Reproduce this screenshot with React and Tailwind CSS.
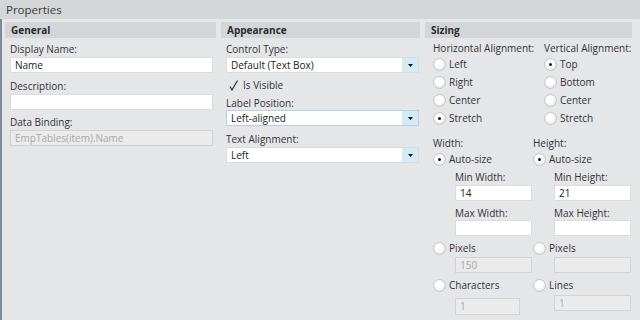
import React from 'react';

// Small building blocks for the property sheet
const Label = ({ children, className = '' }) => (
  <div className={`h-[14px] leading-[14px] whitespace-nowrap ${className}`}>{children}</div>
);

const TextInput = ({ value = '', disabled = false, className = '' }) => (
  <div
    className={`h-[16px] leading-[14px] pl-[4px] border whitespace-nowrap ${
      disabled
        ? 'bg-[#ebebeb] border-[#d3d3d3] text-[#a9a9a9]'
        : 'bg-white border-[#dcdcdc] text-[#222]'
    } ${className}`}
  >
    {value}
  </div>
);

const Select = ({ value, focused = false, className = '' }) => (
  <div
    className={`h-[16px] flex border bg-white ${
      focused ? 'border-[#b3d4e8]' : 'border-[#dcdcdc]'
    } ${className}`}
  >
    <div className="flex-1 leading-[14px] pl-[4px] text-[#222] whitespace-nowrap">{value}</div>
    <div className="w-[16px] bg-[#d6eaf6] flex items-center justify-center">
      <svg width="5" height="3" viewBox="0 0 5 3">
        <path d="M0 0 L5 0 L2.5 3 Z" fill="#111" />
      </svg>
    </div>
  </div>
);

const Radio = ({ checked = false, label }) => (
  <div className="flex items-center h-[18px] gap-[3px] whitespace-nowrap">
    <span className="w-[13px] h-[13px] rounded-full border border-[#c8c8c8] bg-[radial-gradient(circle_at_45%_40%,#ffffff_35%,#d9d9d9_100%)] flex items-center justify-center">
      {checked && <span className="w-[3px] h-[3px] rounded-full bg-[#1a1a1a]" />}
    </span>
    <span>{label}</span>
  </div>
);

const Header = ({ children }) => (
  <div className="h-[16px] leading-[16px] bg-[#d4d5d6] pl-[6px] font-bold text-[#2a2a2a]">
    {children}
  </div>
);

const App = () => {
  return (
    <div className="w-[640px] h-[320px] bg-[#e5e6e7] text-[#333] font-['Open_Sans',sans-serif] text-[10px] flex flex-col overflow-hidden">
      {/* Title bar */}
      <div className="h-[19px] bg-[#d5d6d7] pl-[6px] text-[11.5px] leading-[19px] text-[#3a3a3a]">
        Properties
      </div>

      <div className="flex-1 flex border-l-2 border-[#7e8a97] pt-[3px]">
        {/* General */}
        <div className="w-[216px] pl-[3px] pr-[2px]">
          <Header>General</Header>
          <div className="pl-[5px] pr-[3px] pt-[4px]">
            <Label>Display Name:</Label>
            <TextInput value="Name" className="mt-[1px]" />
            <Label className="mt-[6px]">Description:</Label>
            <TextInput className="mt-[1px]" />
            <Label className="mt-[5px]">Data Binding:</Label>
            <TextInput value="EmpTables(item).Name" disabled className="mt-[1px]" />
          </div>
        </div>

        {/* Appearance */}
        <div className="w-[204px] pl-[3px] pr-[2px]">
          <Header>Appearance</Header>
          <div className="pl-[5px] pr-[1px] pt-[4px]">
            <Label>Control Type:</Label>
            <Select value="Default (Text Box)" className="mt-[1px]" />
            <div className="mt-[5px] h-[14px] flex items-center gap-[5px] pl-[3px]">
              <svg width="9" height="11" viewBox="0 0 9 11">
                <path d="M1 6.5 L3 10 L8.5 0.5" fill="none" stroke="#333" strokeWidth="1.2" />
              </svg>
              <span>Is Visible</span>
            </div>
            <Label className="mt-[4px]">Label Position:</Label>
            <Select value="Left-aligned" focused />
            <Label className="mt-[6px]">Text Alignment:</Label>
            <Select value="Left" className="mt-[1px]" />
          </div>
        </div>

        {/* Sizing */}
        <div className="flex-1 pl-[3px] pr-[8px]">
          <Header>Sizing</Header>
          <div className="pl-[8px] pt-[3px]">
            <div className="flex">
              <div className="w-[111px]">
                <Label>Horizontal Alignment:</Label>
                <Radio label="Left" />
                <Radio label="Right" />
                <Radio label="Center" />
                <Radio label="Stretch" checked />
              </div>
              <div className="flex-1">
                <Label>Vertical Alignment:</Label>
                <Radio label="Top" checked />
                <Radio label="Bottom" />
                <Radio label="Center" />
                <Radio label="Stretch" />
              </div>
            </div>

            <div className="flex mt-[9px]">
              <div className="w-[100px]">
                <Label>Width:</Label>
                <Radio label="Auto-size" checked />
                <div className="pl-[22px]">
                  <Label className="mt-[2px]">Min Width:</Label>
                  <TextInput value="14" className="mt-[1px] w-[77px]" />
                  <Label className="mt-[5px]">Max Width:</Label>
                  <TextInput className="w-[77px]" />
                </div>
                <div className="mt-[3px]">
                  <Radio label="Pixels" />
                </div>
                <div className="pl-[22px]">
                  <TextInput value="150" disabled className="w-[77px]" />
                </div>
                <div className="mt-[3px]">
                  <Radio label="Characters" />
                </div>
                <div className="pl-[22px]">
                  <TextInput value="1" disabled className="mt-[4px] w-[65px] h-[17px]" />
                </div>
              </div>
              <div className="flex-1">
                <Label>Height:</Label>
                <Radio label="Auto-size" checked />
                <div className="pl-[21px]">
                  <Label className="mt-[2px]">Min Height:</Label>
                  <TextInput value="21" className="mt-[1px] w-[77px]" />
                  <Label className="mt-[5px]">Max Height:</Label>
                  <TextInput className="w-[77px]" />
                </div>
                <div className="mt-[3px]">
                  <Radio label="Pixels" />
                </div>
                <div className="pl-[21px]">
                  <TextInput disabled className="w-[77px]" />
                </div>
                <div className="mt-[3px]">
                  <Radio label="Lines" />
                </div>
                <div className="pl-[21px]">
                  <TextInput value="1" disabled className="mt-[1px] w-[77px]" />
                </div>
              </div>
            </div>
          </div>
        </div>
      </div>
    </div>
  );
};

export default App;
